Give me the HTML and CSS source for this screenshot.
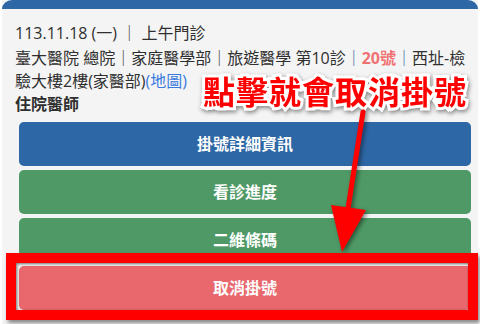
FILE: index.html
```html
<!DOCTYPE html>
<html lang="zh-Hant">
<head>
<meta charset="utf-8">
<title>掛號</title>
<link rel="stylesheet" href="styles.css">
</head>
<body>
<div class="card">
  <div class="card-head"></div>
  <div class="card-body">
    <div class="date">113.11.18 (一) <span class="sep">｜</span> 上午門診</div>
    <div class="info">臺大醫院 總院<span class="sep">｜</span>家庭醫學部<span class="sep">｜</span>旅遊醫學 第10診<span class="sep blue">｜</span><span class="num">20號</span><span class="sep blue">｜</span>西址-檢驗大樓2樓(家醫部)<a class="map">(地圖)</a></div>
    <div class="role">住院醫師</div>
    <div class="actions">
      <div class="btn btn-blue">掛號詳細資訊</div>
      <div class="btn btn-green">看診進度</div>
      <div class="btn btn-green">二維條碼</div>
      <div class="btn btn-red">取消掛號</div>
    </div>
  </div>
</div>
<div class="callout">點擊就會取消掛號</div>
<svg class="arrow" width="480" height="324" viewBox="0 0 480 324">
  <line x1="363" y1="112" x2="347" y2="215" stroke="#ff0000" stroke-width="5" stroke-linecap="round"/>
  <polygon points="331,205 366,210 342,252" fill="#ff0000"/>
</svg>
<div class="highlight"></div>
</body>
</html>
```
FILE: styles.css
```css
html, body {
  margin: 0;
  padding: 0;
}
body {
  width: 480px;
  height: 324px;
  overflow: hidden;
  background: #ffffff;
  position: relative;
  font-family: "Open Sans", "Noto Sans CJK TC", sans-serif;
  color: #2f2f2f;
}
.card {
  margin: 0 2px;
  background: #f4f4f4;
  height: 340px;
}
.card-head {
  height: 9px;
  background: #2e67a5;
  border-radius: 10px 10px 0 0 / 9px 9px 0 0;
}
.card-body {
  padding: 13px 8px 0 13px;
  font-size: 16px;
  line-height: 23px;
}
.date {
  margin-bottom: 2px;
}
.sep {
  color: #3a3a3a;
}
.sep.blue {
  color: #2e67a5;
}
.num {
  color: #f07272;
  font-weight: bold;
}
.map {
  color: #3a7be0;
}
.role {
  font-weight: bold;
}
.actions {
  margin: 6px -1px 0 4px;
  display: flex;
  flex-direction: column;
  gap: 4px;
}
.btn {
  height: 44px;
  border-radius: 5px;
  display: flex;
  align-items: center;
  justify-content: center;
  color: #ffffff;
  font-weight: bold;
  font-size: 16px;
}
.btn-blue {
  background: #2e67a5;
}
.btn-green {
  background: #4f9966;
}
.btn-red {
  background: #e8686e;
}
.callout {
  position: absolute;
  left: 203px;
  top: 68px;
  font-family: "Noto Sans CJK TC", sans-serif;
  font-weight: bold;
  font-size: 32px;
  line-height: 44px;
  letter-spacing: 1px;
  color: #ff0000;
  -webkit-text-stroke: 6px #ffffff;
  paint-order: stroke fill;
  filter: drop-shadow(1px 2px 2px rgba(0, 0, 0, 0.45));
}
.arrow {
  position: absolute;
  left: 0;
  top: 0;
  filter: drop-shadow(2px 2px 2px rgba(0, 0, 0, 0.45));
}
.highlight {
  position: absolute;
  left: 6px;
  top: 253px;
  width: 452px;
  height: 47px;
  border: 10px solid #ff0000;
  box-shadow: 2px 3px 4px rgba(0, 0, 0, 0.45), inset 1px 1px 3px rgba(0, 0, 0, 0.55);
}
```
